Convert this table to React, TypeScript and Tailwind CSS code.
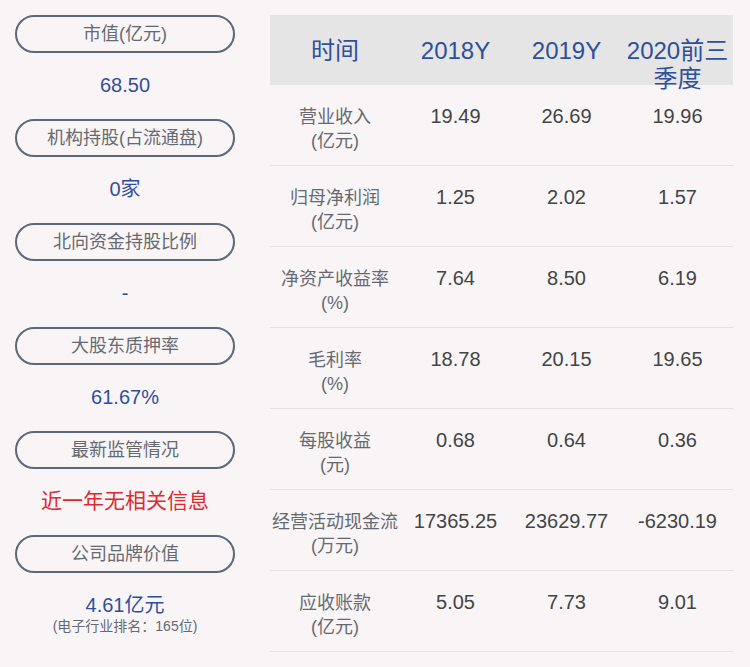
const font = "font-['Liberation_Sans','Noto_Sans_CJK_SC',sans-serif]";

type Stat = { label: string; value: string; red?: boolean; sub?: string };

const stats: Stat[] = [
  { label: "市值(亿元)", value: "68.50" },
  { label: "机构持股(占流通盘)", value: "0家" },
  { label: "北向资金持股比例", value: "-" },
  { label: "大股东质押率", value: "61.67%" },
  { label: "最新监管情况", value: "近一年无相关信息", red: true },
  { label: "公司品牌价值", value: "4.61亿元", sub: "(电子行业排名：165位)" },
];

type Row = { name: string; unit: string; values: string[] };

const rows: Row[] = [
  { name: "营业收入", unit: "(亿元)", values: ["19.49", "26.69", "19.96"] },
  { name: "归母净利润", unit: "(亿元)", values: ["1.25", "2.02", "1.57"] },
  { name: "净资产收益率", unit: "(%)", values: ["7.64", "8.50", "6.19"] },
  { name: "毛利率", unit: "(%)", values: ["18.78", "20.15", "19.65"] },
  { name: "每股收益", unit: "(元)", values: ["0.68", "0.64", "0.36"] },
  { name: "经营活动现金流", unit: "(万元)", values: ["17365.25", "23629.77", "-6230.19"] },
  { name: "应收账款", unit: "(亿元)", values: ["5.05", "7.73", "9.01"] },
];

const headers = ["时间", "2018Y", "2019Y", "2020前三季度"];

export default function App() {
  return (
    <div className={`${font} flex h-[667px] w-[750px] bg-[#f9f5f7] pl-[15px] pt-[15px]`}>
      <div className="flex w-[220px] flex-col">
        {stats.map((s) => (
          <div key={s.label} className="h-[104px]">
            <div className="flex h-[38px] items-center justify-center rounded-full border-2 border-[#5c6778] text-[18px] text-[#666a70]">
              {s.label}
            </div>
            <div className="pt-[20px] text-center">
              <div
                className={`leading-[24px] ${
                  s.red ? "text-[21px] text-[#e0282e]" : "text-[20px] text-[#2e4f9a]"
                }`}
              >
                {s.value}
              </div>
              {s.sub && (
                <div className="text-[14px] leading-[18px] text-[#666a70]">{s.sub}</div>
              )}
            </div>
          </div>
        ))}
      </div>

      <div className="ml-[35px] w-[463px]">
        <div className="grid h-[70px] grid-cols-[130px_111px_111px_111px] bg-[#e5e5e5]">
          {headers.map((h) => (
            <div
              key={h}
              className="h-[70px] pt-[22px] text-center text-[24px] leading-[28px] text-[#2e4f9a]"
            >
              {h}
            </div>
          ))}
        </div>
        {rows.map((r) => (
          <div
            key={r.name}
            className="grid h-[81px] grid-cols-[130px_111px_111px_111px] border-b border-[#e3e0e2] pt-[20px]"
          >
            <div className="text-center text-[18px] leading-[24px] text-[#666a70]">
              <div>{r.name}</div>
              <div>{r.unit}</div>
            </div>
            {r.values.map((v, i) => (
              <div key={i} className="text-center text-[20px] leading-[22px] text-[#444]">
                {v}
              </div>
            ))}
          </div>
        ))}
      </div>
    </div>
  );
}
